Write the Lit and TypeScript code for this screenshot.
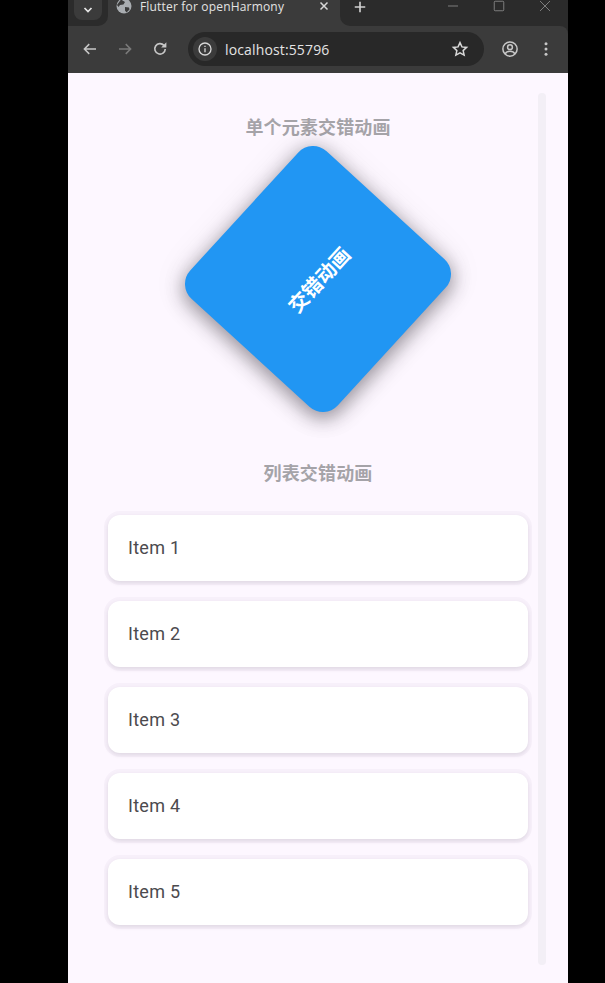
import { LitElement, html, css, svg } from "lit";
import { customElement } from "lit/decorators.js";

const ic = (w: number, body: unknown) => html`<svg class="ic" width=${w} height=${w} viewBox="0 0 24 24" fill="none" stroke="currentColor" stroke-width="2">${body}</svg>`;

@customElement("app-root")
export class AppRoot extends LitElement {
  static styles = css`
    :host { display: block; width: 605px; height: 983px; background: #000; overflow: hidden; font-family: "Noto Sans CJK SC", sans-serif; }
    .window { width: 500px; height: 983px; margin-left: 68px; display: flex; flex-direction: column; background: #fdf7ff; position: relative; overflow: hidden; }
    .ic { display: block; flex: none; }
    .chrome { background: #2b2b2b; flex: none; }
    .strip { height: 26px; background: #3b3b3b; display: flex; align-items: stretch; color: #c7c7c7; }
    .tabsearch { width: 40px; flex: none; background: #2b2b2b; border-radius: 0 0 10px 0; }
    .tabsearch div { width: 28px; height: 20px; margin-left: 6px; border-radius: 0 0 8px 8px; background: #3b3b3b; display: flex; justify-content: center; align-items: center; color: #e6e6e6; }
    .tab { width: 232px; height: 26px; display: flex; flex: none; color: #e3e3e3; font: 12px "Open Sans", sans-serif; letter-spacing: .18px; }
    .tab .fav { margin: 0 8px; height: 13px; color: #a9adb1; }
    .tab .title { flex: 1; white-space: nowrap; height: 14px; line-height: 13px; }
    .tab .close { margin-right: 10px; color: #d8d8d8; }
    .rest { flex: 1; background: #2b2b2b; border-radius: 0 0 0 10px; display: flex; align-items: flex-start; }
    .plus { margin: 0 0 0 13px; color: #d0d0d0; }
    .spacer { flex: 1; }
    .wc { display: flex; color: #999; }
    .wc span { width: 46px; height: 12px; display: flex; align-items: center; justify-content: center; }
    .toolbar { height: 47px; background: #3b3b3b; border-radius: 0 8px 0 0; display: flex; align-items: center; color: #c7c7c7; padding: 0 0 1px 13px; box-sizing: border-box; }
    .nav { margin-right: 17px; }
    .nav.off { color: #7a7a7a; }
    .omni { width: 296px; height: 34px; margin-left: 2px; background: #282828; border-radius: 17px; display: flex; align-items: center; box-sizing: border-box; padding: 0 15px 0 5px; color: #d8d8d8; }
    .omni .info { width: 24px; height: 24px; border-radius: 12px; background: #3b3b3b; display: flex; align-items: center; justify-content: center; margin-right: 8px; flex: none; }
    .url { flex: 1; font: 14px "Open Sans", sans-serif; letter-spacing: .14px; color: #e3e3e3; }
    .tb-right { display: flex; align-items: center; margin-left: 17px; gap: 18px; }
    .content { flex: 1; display: flex; flex-direction: column; align-items: center; }
    .h { font-size: 18px; font-weight: 700; line-height: 26px; letter-spacing: .15px; color: #a5a3a8; text-align: center; }
    .h.a { margin-top: 40px; }
    .h.b { margin-top: 80px; }
    .box { width: 200px; height: 200px; margin-top: 40px; flex: none; background: #2196f3; border-radius: 20px; transform: rotate(-47.5deg); display: flex; align-items: center; justify-content: center; color: #fff; font-size: 20px; font-weight: 700; box-shadow: -3.7px 3.4px 18px 2px rgba(40,35,45,.44), 0 0 30px 8px rgba(80,75,85,.05); }
    .list { width: 420px; margin-top: 30px; display: flex; flex-direction: column; gap: 20px; }
    .card { height: 66px; background: #fff; border-radius: 12px; display: flex; align-items: center; padding: 0 0 2px 20px; box-sizing: border-box; font: 18px Roboto, sans-serif; letter-spacing: .28px; color: #4c4a4e; box-shadow: 0 2px 4px rgba(60,50,70,.13), 0 0 0 4px rgba(100,80,120,.04); }
    .bar { position: absolute; left: 470px; top: 93px; width: 8px; height: 872px; border-radius: 4px; background: #f3eff6; }
  `;

  render() {
    const items = [1, 2, 3, 4, 5];
    return html`<div class="window">
      <div class="chrome">
      <div class="strip">
        <div class="tabsearch"><div>${ic(12, svg`<path d="M5 8l7 7 7-7" stroke-width="3.4"/>`)}</div></div>
        <div class="tab">
          <span class="fav"><svg class="ic" width="16" height="16" viewBox="0 0 16 16" style="margin-top:-2px"><circle cx="8" cy="8" r="7.5" fill="#a9adb1"/><path d="M5 1.500l4 2.500-1.500 2.500-3.500.5-1.500 2-1.500-2zM9 9l4 .5.500 2-3 3-1.500-2z" fill="#3b3b3b"/></svg></span>
          <span class="title">Flutter for openHarmony</span>
          <span class="close">${ic(12, svg`<path d="M5 5l14 14M19 5L5 19" stroke-width="3"/>`)}</span>
        </div>
        <div class="rest">
          <span class="plus">${ic(14, svg`<path d="M12 3v18M3 12h18" stroke-width="2.800"/>`)}</span>
          <span class="spacer"></span>
          <div class="wc">
            <span>${ic(12, svg`<path d="M2 12h20" stroke-width="1.500"/>`)}</span>
            <span>${ic(12, svg`<rect x="2.500" y="2.500" width="19" height="19" rx="2" stroke-width="1.500"/>`)}</span>
            <span>${ic(12, svg`<path d="M2 2l20 20M22 2L2 22" stroke-width="1.500"/>`)}</span>
          </div>
        </div>
      </div>
      <div class="toolbar">
        <span class="nav">${ic(18, svg`<path d="M20 12H5M11 5.500L4.500 12l6.500 6.500"/>`)}</span>
        <span class="nav off">${ic(18, svg`<path d="M4 12h15M13 5.500l6.500 6.500-6.500 6.500"/>`)}</span>
        <span class="nav">${ic(18, svg`<path d="M19 12a7 7 0 1 1-1.700-4.800" stroke-width="2.200"/><path d="M20.500 3v7h-7z" fill="currentColor" stroke="none"/>`)}</span>
        <div class="omni">
          <span class="info">${ic(16, svg`<circle cx="12" cy="12" r="9"/><path d="M12 11v6M12 7v2"/>`)}</span>
          <span class="url">localhost:55796</span>
          ${ic(18, svg`<path d="M12 3.500l2.600 5.700 6.200.7-4.600 4.200 1.300 6.100-5.500-3.100-5.500 3.100 1.300-6.100-4.600-4.200 6.200-.7z"/>`)}
        </div>
        <div class="tb-right">
          ${ic(18, svg`<circle cx="12" cy="12" r="9.500"/><circle cx="12" cy="9.500" r="3.200"/><path d="M5.500 18.500c1.500-3 4-3.500 6.500-3.500s5 .5 6.500 3.500"/>`)}
          <svg class="ic" width="18" height="18" viewBox="0 0 24 24" fill="currentColor"><circle cx="12" cy="5" r="2"/><circle cx="12" cy="12" r="2"/><circle cx="12" cy="19" r="2"/></svg>
        </div>
      </div>
      </div>
      <div class="content">
        <div class="h a">单个元素交错动画</div>
        <div class="box">交错动画</div>
        <div class="h b">列表交错动画</div>
        <div class="list">${items.map((i) => html`<div class="card">Item ${i}</div>`)}</div>
      </div>
      <div class="bar"></div>
    </div>`;
  }
}
